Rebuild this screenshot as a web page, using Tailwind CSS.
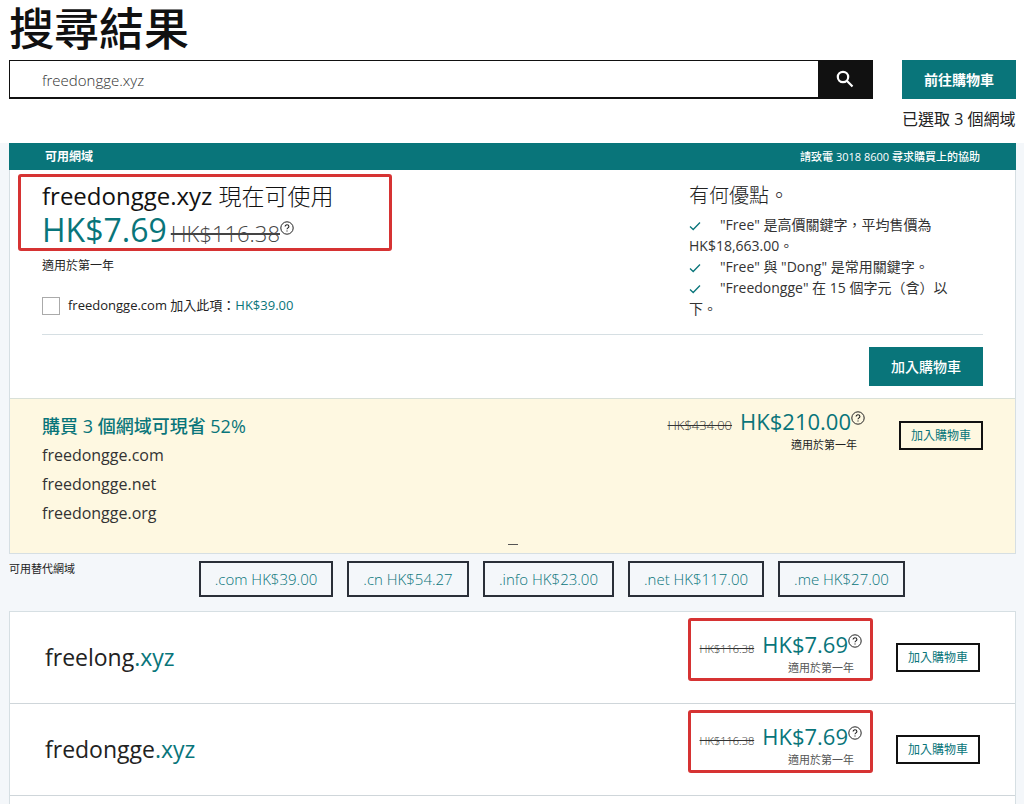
<!DOCTYPE html>
<html lang="zh-Hant-HK">
<head>
<meta charset="utf-8">
<title>搜尋結果</title>
<meta name="viewport" content="width=device-width, initial-scale=1">
<script src="https://cdn.jsdelivr.net/npm/@tailwindcss/browser@4"></script>
</head>
<body class="min-h-screen overflow-x-hidden bg-[#f4f7fa] font-['Open_Sans','Noto_Sans_CJK_TC',sans-serif] text-[#222]">
<svg class="hidden" aria-hidden="true">
  <symbol id="help" viewBox="0 0 14 14"><circle cx="7" cy="7" r="6.2" fill="none" stroke="currentColor" stroke-width="1"/><path d="M5.1 5.6C5.1 4.5 5.9 3.8 7 3.8S8.9 4.500 8.900 5.500C8.900 6.800 7 6.900 7 8.300M7 9.400V10.600" fill="none" stroke="currentColor" stroke-width="1.1"/></symbol>
  <symbol id="check" viewBox="0 0 12 10"><path d="M1 5.500L4.200 8.500L11 1.500" fill="none" stroke="currentColor" stroke-width="1.300"/></symbol>
</svg>

<header class="bg-white pr-2 pl-[9px]">
  <h1 class="h-[60px] text-[45px] leading-[58px] font-medium text-[#111]">搜尋結果</h1>
  <div class="flex h-[83px] items-start gap-[29px]">
    <form class="flex h-[39px] flex-1 border border-b-2 border-[#111]">
      <input aria-label="搜尋網域" type="text" value="freedongge.xyz" class="min-w-0 flex-1 bg-white px-8 pt-0.5 text-[15px] font-light text-[#333] outline-none">
      <button type="button" aria-label="搜尋" class="flex w-[54px] items-center justify-center bg-[#111] text-white">
        <svg class="size-[18px]" viewBox="0 0 18 18" fill="none" stroke="currentColor" stroke-width="2.200"><circle cx="7" cy="7" r="5.200"/><path d="M10.800 10.800L16.500 16.500"/></svg>
      </button>
    </form>
    <div class="w-[114px]">
      <button type="button" class="h-[39px] w-full bg-[#09757a] text-sm font-bold text-white">前往購物車</button>
      <p class="mt-2 text-base leading-6 whitespace-nowrap">已選取 3 個網域</p>
    </div>
  </div>
</header>

<main class="pr-2 pl-[9px]">
  <section class="border border-t-0 border-[#d6dfe3] bg-white">
    <div class="-mx-px flex h-[27px] items-center justify-between bg-[#09757a] px-9 pt-px text-xs text-white">
      <h2 class="font-bold">可用網域</h2>
      <p class="text-[11px] font-medium">請致電 3018 8600 尋求購買上的協助</p>
    </div>
    <div class="h-[228px] px-8">
      <div class="flex h-[165px] justify-between border-b border-[#d6dfe3]">
        <div class="relative pt-2.5">
          <div class="pointer-events-none absolute top-1 -left-6 h-[77px] w-[374px] rounded-[3px] border-3 border-[#d63333]"></div>
          <h3 class="text-2xl leading-8 font-light whitespace-nowrap text-[#111]"><span class="font-normal">freedongge.xyz</span> <span class="text-[23px]">現在可使用</span></h3>
          <p class="flex h-10 items-baseline gap-1 whitespace-nowrap"><span class="text-[32px] leading-9 text-[#09757a]">HK$7.69</span><span class="flex items-start"><s class="text-[22px] font-light text-[#444]">HK$116.38</s><svg class="mt-1 size-3.5" role="img" aria-label="說明"><use href="#help"/></svg></span></p>
          <p class="mt-1 text-xs leading-5">適用於第一年</p>
          <label class="mt-5 flex h-5 items-center gap-2 text-[13px] whitespace-nowrap">
            <input type="checkbox" class="size-[18px] appearance-none border border-[#aaa] bg-white">
            <span>freedongge.com 加入此項：<span class="text-[#09757a]">HK$39.00</span></span>
          </label>
        </div>
        <div class="w-[294px] pt-3 pr-6">
          <h3 class="text-xl leading-7 font-light">有何優點。</h3>
          <ul class="mt-1 text-sm leading-[21px] text-[#333]">
            <li><svg class="mr-[19px] inline-block h-2.5 w-3 text-[#09757a]"><use href="#check"/></svg>"Free" 是高價關鍵字，平均售價為 HK$18,663.00。</li>
            <li><svg class="mr-[19px] inline-block h-2.5 w-3 text-[#09757a]"><use href="#check"/></svg>"Free" 與 "Dong" 是常用關鍵字。</li>
            <li><svg class="mr-[19px] inline-block h-2.5 w-3 text-[#09757a]"><use href="#check"/></svg>"Freedongge" 在 15 個字元（含）以下。</li>
          </ul>
        </div>
      </div>
      <div class="flex justify-end pt-3">
        <button type="button" class="h-[39px] w-[114px] bg-[#09757a] text-sm font-medium text-white">加入購物車</button>
      </div>
    </div>
    <div class="relative flex h-[155px] justify-between border-t border-[#d9e0d8] bg-[#fef8e1] px-8 pt-3">
      <div>
        <h3 class="text-lg leading-[30px] font-medium text-[#09757a]">購買 3 個網域可現省 52%</h3>
        <ul class="text-base leading-[29px] text-[#333]">
          <li>freedongge.com</li>
          <li>freedongge.net</li>
          <li>freedongge.org</li>
        </ul>
      </div>
      <div class="flex items-start gap-[34px]">
        <div class="text-right">
          <p class="flex h-6 items-baseline gap-2"><s class="text-[13px] font-light text-[#333]">HK$434.00</s><span class="flex items-start text-[22px] leading-5 text-[#09757a]">HK$210.00<svg class="size-3.5 text-[#222]" role="img" aria-label="說明"><use href="#help"/></svg></span></p>
          <p class="pr-2 text-[11px] leading-5">適用於第一年</p>
        </div>
        <button type="button" class="mt-2.5 h-[29px] w-[84px] border-2 border-[#111] text-xs text-[#09757a]">加入購物車</button>
      </div>
      <span class="absolute bottom-2 left-1/2 h-px w-2.5 -translate-x-1/2 bg-[#555]"></span>
    </div>
  </section>

  <section class="flex h-[57px] gap-[14px] pt-[7px]">
    <h2 class="w-[176px] text-[11px] leading-4">可用替代網域</h2>
    <button type="button" class="h-9 w-[134px] border-2 border-[#2a2f38] text-[15px] font-light whitespace-nowrap text-[#09757a]">.com HK$39.00</button>
    <button type="button" class="h-9 w-[122px] border-2 border-[#2a2f38] text-[15px] font-light whitespace-nowrap text-[#09757a]">.cn HK$54.27</button>
    <button type="button" class="h-9 w-[131px] border-2 border-[#2a2f38] text-[15px] font-light whitespace-nowrap text-[#09757a]">.info HK$23.00</button>
    <button type="button" class="h-9 w-[136px] border-2 border-[#2a2f38] text-[15px] font-light whitespace-nowrap text-[#09757a]">.net HK$117.00</button>
    <button type="button" class="h-9 w-[127px] border-2 border-[#2a2f38] text-[15px] font-light whitespace-nowrap text-[#09757a]">.me HK$27.00</button>
  </section>

  <ul class="border border-b-0 border-[#d6dfe3] bg-white">
    <li class="flex h-[92px] items-center justify-between border-b border-[#cfd6da] px-[35px]">
      <h3 class="text-[23px] text-[#222]">freelong<span class="text-[#09757a]">.xyz</span></h3>
      <div class="flex items-center gap-[34px]">
        <div class="relative pb-1 text-right">
          <div class="pointer-events-none absolute -top-4 -right-[11px] -left-3 h-[63px] rounded-[3px] border-3 border-[#d63333]"></div>
          <p class="flex h-6 items-baseline gap-2"><s class="text-[11px] font-light text-[#333]">HK$116.38</s><span class="flex items-start text-[22px] leading-5 text-[#09757a]">HK$7.69<svg class="size-3.5 text-[#222]" role="img" aria-label="說明"><use href="#help"/></svg></span></p>
          <p class="pr-2 text-[11px] leading-5 text-[#555]">適用於第一年</p>
        </div>
        <button type="button" class="h-[29px] w-[84px] border-2 border-[#111] text-xs text-[#09757a]">加入購物車</button>
      </div>
    </li>
    <li class="flex h-[92px] items-center justify-between border-b border-[#cfd6da] px-[35px]">
      <h3 class="text-[23px] text-[#222]">fredongge<span class="text-[#09757a]">.xyz</span></h3>
      <div class="flex items-center gap-[34px]">
        <div class="relative pb-1 text-right">
          <div class="pointer-events-none absolute -top-4 -right-[11px] -left-3 h-[63px] rounded-[3px] border-3 border-[#d63333]"></div>
          <p class="flex h-6 items-baseline gap-2"><s class="text-[11px] font-light text-[#333]">HK$116.38</s><span class="flex items-start text-[22px] leading-5 text-[#09757a]">HK$7.69<svg class="size-3.5 text-[#222]" role="img" aria-label="說明"><use href="#help"/></svg></span></p>
          <p class="pr-2 text-[11px] leading-5 text-[#555]">適用於第一年</p>
        </div>
        <button type="button" class="h-[29px] w-[84px] border-2 border-[#111] text-xs text-[#09757a]">加入購物車</button>
      </div>
    </li>
    <li class="h-[9px]" aria-hidden="true"></li>
  </ul>
</main>
</body>
</html>
